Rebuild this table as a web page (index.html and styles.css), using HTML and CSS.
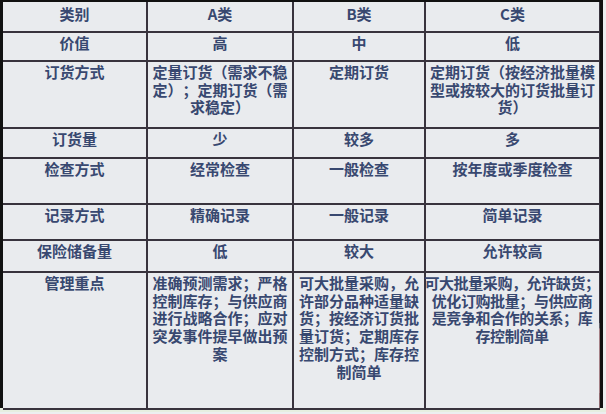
FILE: index.html
```html
<!DOCTYPE html>
<html lang="zh-CN">
<head>
<meta charset="utf-8">
<title>ABC分类</title>
<link rel="stylesheet" href="styles.css">
</head>
<body>
<div class="page">
  <div class="sheet">
    <div class="grid">
      <div class="cell h">类别</div><div class="cell h">A类</div><div class="cell h">B类</div><div class="cell h">C类</div>
      <div class="cell">价值</div><div class="cell">高</div><div class="cell">中</div><div class="cell">低</div>
      <div class="cell">订货方式</div><div class="cell">定量订货（需求不稳定）；定期订货（需求稳定）</div><div class="cell">定期订货</div><div class="cell">定期订货（按经济批量模型或按较大的订货批量订货）</div>
      <div class="cell">订货量</div><div class="cell">少</div><div class="cell">较多</div><div class="cell">多</div>
      <div class="cell">检查方式</div><div class="cell">经常检查</div><div class="cell">一般检查</div><div class="cell">按年度或季度检查</div>
      <div class="cell">记录方式</div><div class="cell">精确记录</div><div class="cell">一般记录</div><div class="cell">简单记录</div>
      <div class="cell">保险储备量</div><div class="cell">低</div><div class="cell">较大</div><div class="cell">允许较高</div>
      <div class="cell">管理重点</div><div class="cell">准确预测需求；严格控制库存；与供应商进行战略合作；应对突发事件提早做出预案</div><div class="cell">可大批量采购，允许部分品种适量缺货；按经济订货批量订货；定期库存控制方式；库存控制简单</div><div class="cell wide"><div class="wide-text">可大批量采购，允许缺货；&#8203;优化订购批量；与供应商&#8203;是竞争和合作的关系；库&#8203;存控制简单</div></div>
    </div>
    <div class="deco-grey"></div>
    <svg class="deco-red" width="70" height="90" viewBox="0 0 70 90"><polygon points="0,48 62,0 62,80 0,80" fill="#e7a3a6" fill-opacity="0.5"/></svg>
  </div>
  <div class="foot"></div>
</div>
</body>
</html>
```
FILE: styles.css
```css
html, body {
  margin: 0;
  padding: 0;
  background: #e9ebee;
}
.page {
  width: 606px;
  height: 414px;
  overflow: hidden;
  background: #eceef0;
}
.sheet {
  position: relative;
  width: 603px;
  height: 408px;
  border-top: 2px solid #111;
  border-left: 3px solid #111;
  border-right: 3px solid #111;
  box-sizing: border-box;
}
.grid {
  display: grid;
  grid-template-columns: 143px 144px 130px 173px;
  grid-template-rows: 29px 27px 65px 28px 44px 34px 30px 135px;
  gap: 2px;
  background: #38333d;
  padding-bottom: 2px;
}
.cell {
  background: #e9ebee;
  color: #384870;
  font-family: "Noto Sans CJK SC", "Noto Sans", sans-serif;
  font-weight: 700;
  font-size: 15px;
  line-height: 17.7px;
  text-align: center;
  padding: 1px 0 0;
  word-break: break-all;
  text-spacing-trim: space-all;
}
.cell.h {
  padding-top: 3px;
}
.cell.wide {
  position: relative;
  z-index: 1;
}
.wide-text {
  width: 176px;
  margin-left: -2px;
  letter-spacing: -0.4px;
  word-break: keep-all;
}
.deco-grey {
  position: absolute;
  left: 581px;
  top: 321px;
  width: 16px;
  height: 70px;
  background: rgba(190, 196, 204, 0.3);
}
.deco-red {
  position: absolute;
  left: 535px;
  top: 326px;
}
.foot {
  height: 4px;
  background: #e6eee0;
}
```
